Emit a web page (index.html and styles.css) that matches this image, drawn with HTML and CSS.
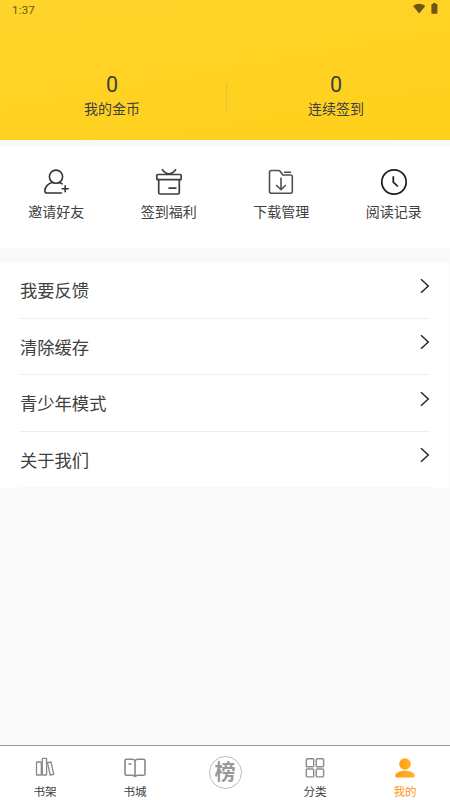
FILE: index.html
```html
<!DOCTYPE html>
<html lang="zh-CN">
<head>
<meta charset="utf-8">
<title>我的</title>
<link rel="stylesheet" href="styles.css">
</head>
<body>
<div class="app">
  <header class="hero">
    <div class="status">
      <span class="time">1:37</span>
      <svg class="status-icons" width="25" height="12" viewBox="0 0 25 12" fill="#6b5711"><path d="M0 2.900Q6.200-1.300 12.400 2.900L6.200 10.600Z"/><path d="M20 0h2.800v1h.8q.8 0 .8.800v8.200q0 .8-.8.800h-4.400q-.8 0-.8-.8V1.800q0-.8.800-.8h.8Z"/></svg>
    </div>
    <div class="stats">
      <div class="stat"><span class="value">0</span><span class="label">我的金币</span></div>
      <div class="divider"></div>
      <div class="stat"><span class="value">0</span><span class="label">连续签到</span></div>
    </div>
  </header>

  <section class="shortcuts">
    <a class="shortcut">
      <svg width="28" height="28" viewBox="0 0 28 28" fill="none" stroke="#353535" stroke-width="1.600" stroke-linecap="round"><circle cx="14" cy="8.700" r="6.600"/><path d="M10.200 14.500C6.200 15.500 2.800 19 2.800 22.700Q2.800 25 5 25H19.500M17.500 14.500L20 15.800M23.200 17.700v6M20.200 20.700h6"/></svg>
      <span>邀请好友</span>
    </a>
    <a class="shortcut">
      <svg width="28" height="28" viewBox="0 0 28 28" fill="none" stroke="#3d3d3d" stroke-width="1.700" stroke-linejoin="round"><rect x="1.800" y="6.500" width="24.400" height="5.200" rx="1"/><path d="M3.700 11.700V24.500q0 1.500 1.500 1.500H22.800q1.500 0 1.500-1.500V11.700M7 1.200Q14 10.500 21 1.200M13.500 20.200h8"/></svg>
      <span>签到福利</span>
    </a>
    <a class="shortcut">
      <svg width="28" height="28" viewBox="0 0 28 28" fill="none" stroke="#505050" stroke-width="1.600" stroke-linejoin="round"><path d="M4.500 2.500H11.500Q12.600 2.500 13.300 3.500L15.800 7H23.300Q25.300 7 25.300 9V23.200Q25.300 25.200 23.300 25.200H4.500Q2.500 25.200 2.500 23.200V4.500Q2.500 2.500 4.500 2.500ZM17 4.300H24M14 9.700V21.500M9.200 17L14 21.700L18.800 17"/></svg>
      <span>下载管理</span>
    </a>
    <a class="shortcut">
      <svg width="28" height="28" viewBox="0 0 28 28" fill="none" stroke="#1b1b1b" stroke-width="1.700"><circle cx="14" cy="14" r="12.200"/><path d="M13.300 8.200V14.200L17.800 18.500"/></svg>
      <span>阅读记录</span>
    </a>
  </section>

  <main class="menu">
    <a class="row"><span>我要反馈</span><svg class="chevron" width="10" height="16" viewBox="0 0 10 16"><path d="M1 1.300L8.300 8L1 14.700"/></svg></a>
    <a class="row"><span>清除缓存</span><svg class="chevron" width="10" height="16" viewBox="0 0 10 16"><path d="M1 1.300L8.300 8L1 14.700"/></svg></a>
    <a class="row"><span>青少年模式</span><svg class="chevron" width="10" height="16" viewBox="0 0 10 16"><path d="M1 1.300L8.300 8L1 14.700"/></svg></a>
    <a class="row"><span>关于我们</span><svg class="chevron" width="10" height="16" viewBox="0 0 10 16"><path d="M1 1.300L8.300 8L1 14.700"/></svg></a>
  </main>

  <nav class="tabs">
    <a class="tab">
      <svg width="22" height="22" viewBox="0 0 22 22" fill="none" stroke="#888" stroke-width="1.300" stroke-linejoin="round"><rect x="2.500" y="5" width="4.800" height="13" rx=".6"/><rect x="8.300" y="1.400" width="4.300" height="16.600" rx=".6"/><path d="M13.500 5.600L17 5L19.700 17.300L16.200 18Z"/></svg>
      <span>书架</span>
    </a>
    <a class="tab">
      <svg width="22" height="22" viewBox="0 0 22 22" fill="none" stroke="#888" stroke-width="1.600" stroke-linejoin="round"><path d="M11 3.700Q10 2.300 8.300 2.300H2.500Q1 2.300 1 3.800V16.700Q1 18.200 2.500 18.200H8.500L11 19.400L13.500 18.200H19.500Q21 18.200 21 16.700V3.800Q21 2.300 19.500 2.300H13.700Q12 2.300 11 3.700ZM11 3.700V18.700M4.500 7H7.500"/></svg>
      <span>书城</span>
    </a>
    <a class="tab rank"><span class="badge">榜</span></a>
    <a class="tab">
      <svg width="22" height="22" viewBox="0 0 22 22" fill="none" stroke="#8b8b8b" stroke-width="1.400"><rect x="2.300" y="1.800" width="7.400" height="7.900" rx="1"/><rect x="12.200" y="1.800" width="7.400" height="7.900" rx="1"/><rect x="2.300" y="12" width="7.400" height="7.900" rx="1"/><rect x="12.200" y="12" width="7.400" height="7.900" rx="1"/></svg>
      <span>分类</span>
    </a>
    <a class="tab active">
      <svg width="22" height="22" viewBox="0 0 22 22"><defs><linearGradient id="g" x1="0" x2="1" y1="0" y2="0"><stop offset="0" stop-color="#ff9b0c"/><stop offset="1" stop-color="#ffb52b"/></linearGradient></defs><g fill="url(#g)"><circle cx="11" cy="7" r="5.800"/><path d="M1.200 18.700C1.200 16 5.500 13.700 11 13.700S20.800 16 20.800 18.700Q20.800 20.500 19 20.500H3Q1.200 20.500 1.200 18.700Z"/></g></svg>
      <span>我的</span>
    </a>
  </nav>
</div>
</body>
</html>
```
FILE: styles.css
```css
* { box-sizing: border-box; }

body {
  margin: 0;
  font-family: Roboto, "Noto Sans CJK SC", sans-serif;
  color: #404040;
}

.app {
  display: flex;
  flex-direction: column;
  width: 450px;
  height: 800px;
  background: #f9f9f9;
}

.hero {
  height: 140px;
  background: linear-gradient(170deg, #ffd42b, #ffd01b);
}

.status {
  display: flex;
  justify-content: space-between;
  height: 20px;
  padding: 4px 12px 0;
}

.time {
  font-size: 11.5px;
  line-height: 13px;
  letter-spacing: .2px;
  color: #6b5711;
}

.status-icons { margin-top: -1px; }

.stats {
  display: flex;
  padding-top: 52px;
}

.stat {
  display: flex;
  flex: none;
  flex-direction: column;
  align-items: center;
  width: 224px;
}

.value {
  font-size: 21.5px;
  line-height: 25px;
}

.label {
  font-size: 14px;
  line-height: 22px;
  margin-top: 1px;
}

.divider {
  flex: none;
  width: 1px;
  height: 29px;
  margin: 11px -1px 0 2px;
  background: #e8c331;
}

.stat:last-child { margin-left: -2px; }

.shortcuts {
  display: grid;
  grid-template-columns: repeat(4, 1fr);
  height: 101px;
  margin-top: 7px;
  padding-top: 21px;
  background: #fff;
}

.shortcut {
  display: flex;
  flex-direction: column;
  align-items: center;
  font-size: 14px;
  line-height: 20px;
}

.shortcut span { margin-top: 6px; }

.menu {
  margin: 14px 1px 0 0;
  padding: 0 19px 0 20px;
  background: #fff;
}

.row {
  display: flex;
  justify-content: space-between;
  height: 56.6px;
  border-bottom: 1px solid #eee;
  font-size: 17.3px;
  line-height: 58px;
}

.row:last-child { border-color: #f7f7f7; }

.chevron {
  margin-top: 15.5px;
  fill: none;
  stroke: #222;
  stroke-width: 1.4;
}

.tabs {
  display: grid;
  grid-template-columns: repeat(5, 1fr);
  height: 55px;
  margin-top: auto;
  border-top: 1px solid #999;
  background: #fff;
}

.tab {
  display: flex;
  flex-direction: column;
  align-items: center;
  padding-top: 11px;
  font-size: 11.6px;
  line-height: 18px;
}

.tab span { margin-top: 4px; }

.active { color: #ff9710; }

.rank { padding-top: 10px; }

.tab .badge {
  width: 33px;
  height: 33px;
  margin: 0;
  border: 1.5px solid #bbb;
  border-radius: 50%;
  color: #999;
  font-size: 21px;
  font-weight: 700;
  line-height: 31px;
  text-align: center;
}
```
